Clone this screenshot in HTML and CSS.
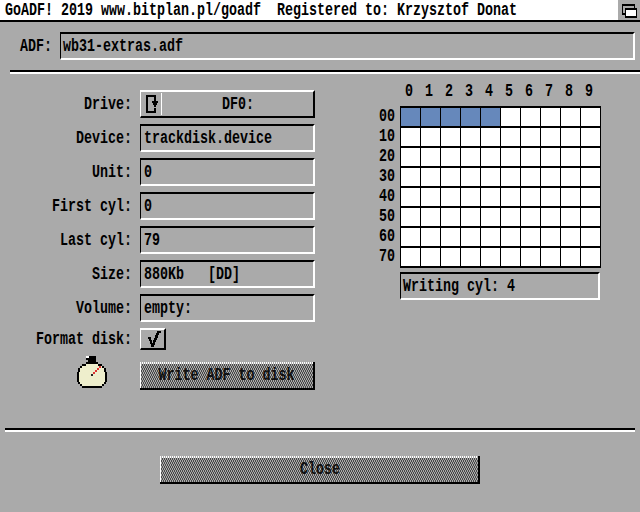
FILE: index.html
```html
<!DOCTYPE html>
<html lang="en">
<head>
<meta charset="utf-8">
<title>GoADF!</title>
<link rel="stylesheet" href="styles.css">
</head>
<body>
<header class="titlebar">
  <span class="t title-text">GoADF! 2019 www.bitplan.pl/goadf  Registered to: Krzysztof Donat</span>
  <span class="depth"><svg width="22" height="20" viewBox="0 0 22 20" shape-rendering="crispEdges"><path fill="#000" d="M4 4h13v11H4z"/><path fill="#aaa" d="M5 6h11v7H5z"/><path fill="#000" d="M7 8h12v10H7z"/><path fill="#fff" d="M8 10h10v6H8z"/></svg></span>
</header>
<div class="adf-row">
  <span class="t adf-label">ADF:</span>
  <div class="field sunken adf-field"><span class="t">wb31-extras.adf</span></div>
</div>
<div class="rule rule-top"></div>
<main class="columns">
  <section class="form">
    <div class="row"><span class="t label">Drive:</span>
      <div class="field raised drive">
        <svg class="cycle" width="22" height="24" viewBox="0 0 22 24" shape-rendering="crispEdges"><path fill="#000" d="M5 3h10v2H7v14h6v-3h2v5H5z"/><path fill="#000" d="M13 5h2v4h2v2h-1v2h-1v2h-2v-2h-1v-2h-1V9h2z"/><path fill="#fff" d="M20 1h1v22h-1z"/></svg>
        <span class="t drive-value">DF0:</span>
      </div>
    </div>
    <div class="row"><span class="t label">Device:</span><div class="field sunken"><span class="t">trackdisk.device</span></div></div>
    <div class="row"><span class="t label">Unit:</span><div class="field sunken"><span class="t">0</span></div></div>
    <div class="row"><span class="t label">First cyl:</span><div class="field sunken"><span class="t">0</span></div></div>
    <div class="row"><span class="t label">Last cyl:</span><div class="field sunken"><span class="t">79</span></div></div>
    <div class="row"><span class="t label">Size:</span><div class="field sunken"><span class="t">880Kb   [DD]</span></div></div>
    <div class="row"><span class="t label">Volume:</span><div class="field sunken"><span class="t">empty:</span></div></div>
    <div class="row row-check"><span class="t label">Format disk:</span>
      <div class="check raised"><svg width="22" height="18" viewBox="0 0 22 18" shape-rendering="crispEdges"><path fill="#000" d="M6 7h3v3h1v3h1v-3h1V8h1V5h1V3h1V1h4v2h-2v2h-1v3h-1v2h-1v2h-1v3h-1v2H9v-3H8v-3H7v-2H6z"/></svg></div>
    </div>
    <div class="row row-write">
      <svg class="watch" width="32" height="32" viewBox="0 0 32 32" shape-rendering="crispEdges">
        <path fill="#000" d="M10 0h10v6h2v2h4v2h2v2h2v4h1v10h-1v2h-2v2h-2v2H6v-2H4v-2H2v-2H1V16h1v-4h2v-2h2V8h4V6h2V4h-2z"/>
        <path fill="#fff" d="M10 0h3v2h-3z"/>
        <path fill="#eeeecc" d="M10 8h12v2h4v2h2v4h1v10h-1v2h-2v2H6v-2H4v-2H3V16h1v-4h2v-2h4z"/>
        <path fill="#d33" d="M23 10h2v2h-2zM21 12h2v2h-2zM19 14h2v2h-2zM17 16h2v2h-2z"/>
        <path fill="#222" d="M15 18h2v2h-2z"/>
      </svg>
      <div class="ghost write"><span class="t">Write ADF to disk</span></div>
    </div>
  </section>
  <section class="side">
    <div class="heads">
      <span class="t">0</span><span class="t">1</span><span class="t">2</span><span class="t">3</span><span class="t">4</span><span class="t">5</span><span class="t">6</span><span class="t">7</span><span class="t">8</span><span class="t">9</span>
    </div>
    <div class="grid-wrap">
      <div class="rows">
        <span class="t">00</span><span class="t">10</span><span class="t">20</span><span class="t">30</span><span class="t">40</span><span class="t">50</span><span class="t">60</span><span class="t">70</span>
      </div>
      <div class="cells" id="cells"></div>
    </div>
    <div class="field sunken status"><span class="t">Writing cyl: 4</span></div>
  </section>
</main>
<div class="rule rule-bottom"></div>
<div class="close-wrap"><div class="ghost close"><span class="t">Close</span></div></div>
<script src="app.js"></script>
</body>
</html>
```

FILE: app.js
```js
var c = document.getElementById('cells');
for (var i = 0; i < 80; i++) {
  var d = document.createElement('div');
  d.className = i < 5 ? 'cell done' : 'cell';
  c.appendChild(d);
}
```

FILE: styles.css
```css
* { box-sizing: border-box; }
html, body { margin: 0; height: 100%; }
body { width: 640px; height: 512px; background: #aaa; color: #000; overflow: hidden;
  font-family: "Liberation Mono", "DejaVu Sans Mono", monospace; font-size: 13.33px; font-weight: 700; }
.t { display: inline-block; white-space: pre; transform: translateY(1px) scaleY(1.4); line-height: 16px; height: 16px; }

.titlebar { height: 22px; background: #fff; border-bottom: 2px solid #000; display: flex; justify-content: space-between; padding-left: 5px; }
.title-text { margin-top: 2px; }
.depth { width: 22px; height: 20px; background: #aaa; display: block; }
.depth svg { display: block; }

.adf-row { display: flex; align-items: center; margin-top: 10px; padding-left: 20px; padding-right: 5px; }
.adf-label { width: 40px; }
.adf-field { flex: 1; height: 28px; }

.field { display: flex; align-items: center; padding-left: 2px; border-style: solid; }
.sunken { border-color: #000 #fff #fff #000; border-width: 2px 2px 2px 1px; }
.raised { border-color: #fff #000 #000 #fff; border-width: 2px 2px 2px 1px; }

.rule { height: 4px; border-top: 2px solid #000; border-bottom: 2px solid #fff; }
.rule-top { margin: 10px 0 0 10px; }
.rule-bottom { margin: 0 5px; }

.columns { display: flex; height: 354px; }
.form { width: 316px; padding-top: 16px; display: flex; flex-direction: column; }
.row { display: flex; align-items: center; height: 28px; margin-bottom: 6px; }
.label { width: 132px; text-align: right; margin-right: 8px; flex: none; }
.row .field { width: 175px; height: 28px; padding-left: 3px; }
.row .drive { padding-left: 0; }
.cycle { flex: none; }
.drive-value { margin-left: 59px; }
.row-check { height: 22px; margin-bottom: 0; }
.check { width: 26px; height: 22px; border-style: solid; display: flex; align-items: center; justify-content: center; }
.row-write { height: 28px; margin-top: 12px; padding-left: 76px; align-items: flex-start; }
.watch { flex: none; margin: -6px 32px 0 0; }
.ghost { position: relative; display: flex; align-items: center; justify-content: center; height: 28px;
  background:
    repeating-linear-gradient(90deg, #fff 0 1px, #aaa 1px 2px) top / 100% 2px no-repeat,
    linear-gradient(#fff, #fff) left / 1px 100% no-repeat,
    #484848;
  border-bottom: 2px solid #000; border-right: 2px solid #000; }
.ghost::after { content: ""; position: absolute; inset: 2px 0 0 1px;
  background: conic-gradient(transparent 25%, #aaa 0 50%, transparent 0 75%, #aaa 0) 0 0 / 2px 4px; }
.ghost .t { position: relative; z-index: 1; color: #111; }
.write { width: 175px; flex: none; }
.close { width: 320px; }
.close .t { margin-left: 2px; }
.close-wrap { padding: 24px 0 0 160px; }

.side { width: 324px; }
.heads { display: grid; grid-template-columns: repeat(10, 20px); margin: 9px 0 0 83px; height: 16px; }
.heads .t { text-align: center; width: 20px; }
.grid-wrap { display: flex; margin-top: 7px; }
.rows { width: 84px; display: flex; flex-direction: column; align-items: flex-end; padding: 0 5px 0 0; }
.rows .t { height: 20px; line-height: 20px; }
.cells { width: 201px; height: 162px; display: grid; grid-template-columns: repeat(10, 20px); grid-auto-rows: 20px;
  background: #000; padding: 2px 0 0 1px; }
.cell { background: #fff; border-right: 1px solid #000; border-bottom: 2px solid #000; }
.done { background: #6688bb; }
.status { width: 200px; height: 28px; margin: 4px 0 0 84px; }
```
